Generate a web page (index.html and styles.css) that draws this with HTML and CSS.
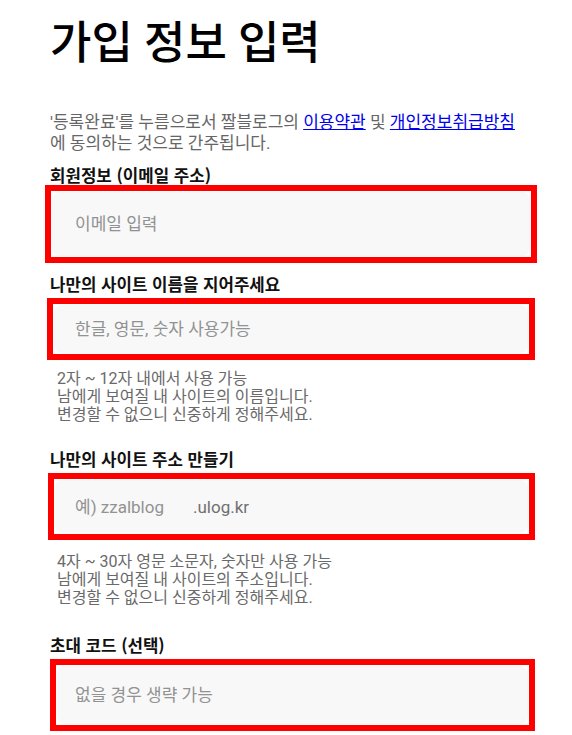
FILE: index.html
```html
<!DOCTYPE html>
<html lang="ko">
<head>
<meta charset="utf-8">
<title>가입 정보 입력</title>
<link rel="stylesheet" href="styles.css">
</head>
<body>
<main class="page">
  <h1 class="title">가입 정보 입력</h1>
  <p class="notice">'등록완료'를 누름으로서 짤블로그의 <a href="#" class="link">이용약관</a> 및 <a href="#" class="link">개인정보취급방침</a><br>에 동의하는 것으로 간주됩니다.</p>

  <section class="field field-email">
    <h2 class="label">회원정보 (이메일 주소)</h2>
    <div class="mark mark-email">
      <div class="input-box"><input class="field-input" type="text" placeholder="이메일 입력"></div>
    </div>
  </section>

  <section class="field field-name">
    <h2 class="label">나만의 사이트 이름을 지어주세요</h2>
    <div class="mark mark-name">
      <div class="input-box"><input class="field-input" type="text" placeholder="한글, 영문, 숫자 사용가능"></div>
    </div>
    <p class="help">2자 ~ 12자 내에서 사용 가능<br>남에게 보여질 내 사이트의 이름입니다.<br>변경할 수 없으니 신중하게 정해주세요.</p>
  </section>

  <section class="field field-url">
    <h2 class="label">나만의 사이트 주소 만들기</h2>
    <div class="mark mark-url">
      <div class="input-box"><input class="field-input url-input" type="text" placeholder="예) zzalblog"><span class="suffix">.ulog.kr</span></div>
    </div>
    <p class="help help-url">4자 ~ 30자 영문 소문자, 숫자만 사용 가능<br>남에게 보여질 내 사이트의 주소입니다.<br>변경할 수 없으니 신중하게 정해주세요.</p>
  </section>

  <section class="field field-code">
    <h2 class="label">초대 코드 (선택)</h2>
    <div class="mark mark-code">
      <div class="input-box"><input class="field-input" type="text" placeholder="없을 경우 생략 가능"></div>
    </div>
  </section>
</main>
</body>
</html>
```

FILE: styles.css
```css
html, body {
  margin: 0;
  padding: 0;
  background: #ffffff;
}

body {
  font-family: Roboto, "Noto Sans CJK KR", "Noto Sans", sans-serif;
  color: #000;
}

.page {
  padding: 0 35px 0 50px;
}

.title {
  margin: 11px 0 0;
  font-size: 45px;
  line-height: 66px;
  font-weight: 500;
  letter-spacing: 0;
}

.notice {
  margin: 35px 0 0;
  font-size: 17px;
  line-height: 21px;
  color: #666;
}

.link {
  color: #0000ee;
  text-decoration: underline;
}

.field {
  display: flex;
  flex-direction: column;
}

.label {
  margin: 0;
  font-family: "Noto Sans CJK KR", "Noto Sans", sans-serif;
  font-size: 16.8px;
  line-height: 18px;
  font-weight: 700;
  color: #111;
}

.field-email { margin-top: 12px; }
.field-name { margin-top: 12px; }
.field-url { margin-top: 26px; }
.field-code { margin-top: 29px; }

.field-email .label {
  margin-bottom: 1px;
}

.field-name .label,
.field-url .label,
.field-code .label {
  margin-bottom: 5px;
}

.mark {
  box-sizing: border-box;
  border: 6px solid #ff0000;
  padding: 1px;
  background: #fff;
}

.mark-email { margin-left: -5px; width: 492px; height: 78px; }
.mark-name { margin-left: -3px; width: 488px; height: 62px; }
.mark-url { margin-left: -2px; width: 487px; height: 67px; }
.mark-code { margin-left: 0; width: 485px; height: 72px; }

.input-box {
  height: 100%;
  background: #f8f8f8;
  border-radius: 8px;
  display: flex;
  align-items: center;
}

.field-input {
  flex: 1;
  min-width: 0;
  border: 0;
  outline: 0;
  background: transparent;
  font-family: Roboto, "Noto Sans CJK KR", "Noto Sans", sans-serif;
  font-size: 17px;
  color: #333;
  padding: 0;
}

.field-input::placeholder {
  color: #929292;
}

.mark-email .field-input { padding-left: 23px; }
.mark-name .field-input { padding-left: 21px; }
.mark-url .field-input { padding-left: 20px; }
.mark-code .field-input { padding-left: 18px; }

.url-input {
  flex: 0 0 138px;
  box-sizing: border-box;
}

.suffix {
  font-size: 17px;
  color: #707070;
}

.help {
  margin: 10px 0 0 7px;
  font-size: 16px;
  line-height: 18px;
  color: #6a6a6a;
}

.help-url {
  margin-top: 13px;
}
```
